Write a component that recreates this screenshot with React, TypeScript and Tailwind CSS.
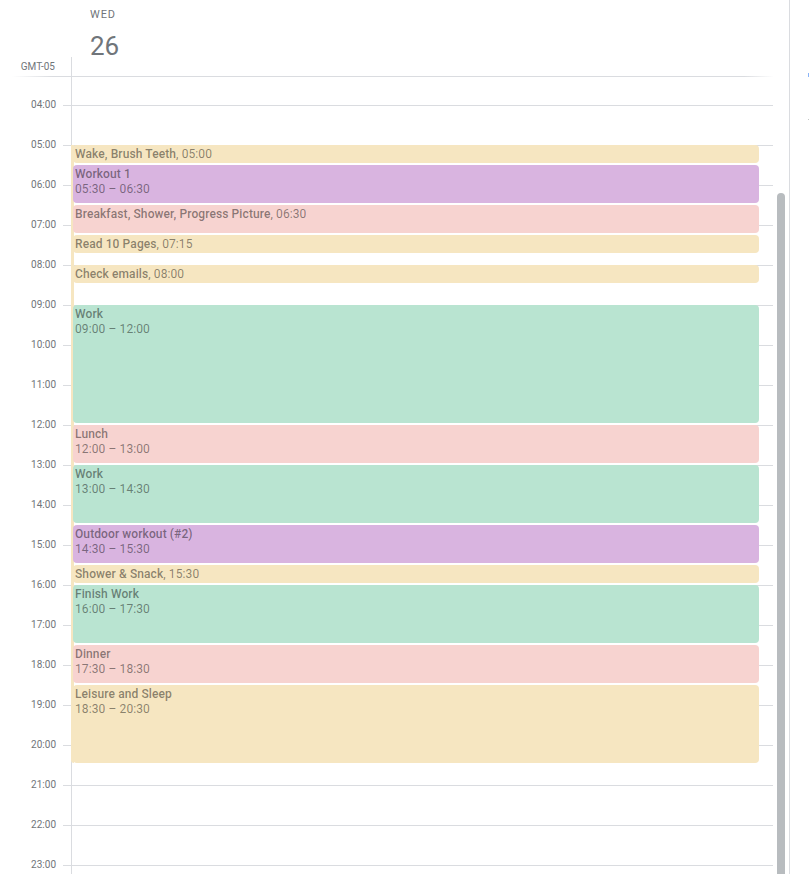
const HOURS = Array.from({ length: 20 }, (_, i) => i + 4);
const HOUR_H = 40;
const OFFSET = 28;

type Tone = "yellow" | "purple" | "pink" | "green";

interface CalEvent {
  title: string;
  start: number;
  end: number;
  tone: Tone;
  compact?: boolean;
}

const toneClass: Record<Tone, string> = {
  yellow: "bg-[#f6e6c1]",
  purple: "bg-[#d9b4e0]",
  pink: "bg-[#f7d3d0]",
  green: "bg-[#b9e4d1]",
};

const events: CalEvent[] = [
  { title: "Wake, Brush Teeth", start: 5, end: 5.5, tone: "yellow", compact: true },
  { title: "Workout 1", start: 5.5, end: 6.5, tone: "purple" },
  { title: "Breakfast, Shower, Progress Picture", start: 6.5, end: 7.25, tone: "pink", compact: true },
  { title: "Read 10 Pages", start: 7.25, end: 7.75, tone: "yellow", compact: true },
  { title: "Check emails", start: 8, end: 8.5, tone: "yellow", compact: true },
  { title: "Work", start: 9, end: 12, tone: "green" },
  { title: "Lunch", start: 12, end: 13, tone: "pink" },
  { title: "Work", start: 13, end: 14.5, tone: "green" },
  { title: "Outdoor workout (#2)", start: 14.5, end: 15.5, tone: "purple" },
  { title: "Shower & Snack", start: 15.5, end: 16, tone: "yellow", compact: true },
  { title: "Finish Work", start: 16, end: 17.5, tone: "green" },
  { title: "Dinner", start: 17.5, end: 18.5, tone: "pink" },
  { title: "Leisure and Sleep", start: 18.5, end: 20.5, tone: "yellow" },
];

const fmt = (t: number) => {
  const h = Math.floor(t);
  const m = Math.round((t - h) * 60);
  return `${h.toString().padStart(2, "0")}:${m.toString().padStart(2, "0")}`;
};

const topOf = (t: number) => OFFSET + (t - 4) * HOUR_H;

function EventBlock({ ev }: { ev: CalEvent }) {
  return (
    <div
      className={`absolute left-[1px] right-[14px] overflow-hidden rounded-[4px] pl-[2px] pt-[2px] text-[12px] leading-[15px] tracking-[0.1px] text-black/45 ${toneClass[ev.tone]}`}
      style={{ top: topOf(ev.start), height: (ev.end - ev.start) * HOUR_H - 2 }}
    >
      {ev.compact ? (
        <div className="truncate">
          <span className="font-medium">{ev.title}</span>, {fmt(ev.start)}
        </div>
      ) : (
        <>
          <div className="truncate font-medium">{ev.title}</div>
          <div>
            {fmt(ev.start)} – {fmt(ev.end)}
          </div>
        </>
      )}
    </div>
  );
}

export default function App() {
  return (
    <div className="flex h-[874px] w-[809px] overflow-hidden bg-white font-[Roboto,sans-serif] text-[#70757a]">
      <div className="flex w-[790px] flex-col border-r border-[#dadce0]">
        {/* header */}
        <div className="flex h-[76px] shrink-0">
          <div className="flex w-[72px] flex-col justify-end">
            <div className="flex h-[19px] items-center justify-end border-r border-[#dadce0] pr-[16px] text-[10px]">
              GMT-05
            </div>
          </div>
          <div className="flex-1 pl-[18px] pt-[7px]">
            <div className="text-[11px] leading-[16px] tracking-[0.9px]">WED</div>
            <div className="mt-[7px] text-[26px] leading-[32px]">26</div>
          </div>
        </div>
        <div className="ml-[12px] h-px w-[762px] shrink-0 bg-[linear-gradient(to_right,transparent,#dadce0_40px,#dadce0_calc(100%-30px),transparent)]" />

        {/* body */}
        <div className="flex min-h-0 flex-1">
          <div className="w-[71px] shrink-0">
            <div className="h-[28px]" />
            {HOURS.map((h) => (
              <div key={h} className="flex h-[40px] items-start">
                <span className="-mt-[6px] w-[56px] text-right text-[10px] leading-[12px]">
                  {fmt(h)}
                </span>
                <span className="ml-auto w-[8px] border-t border-[#dadce0]" />
              </div>
            ))}
          </div>

          <div className="relative w-[702px] shrink-0 border-l border-[#dadce0]">
            <div className="h-[28px]" />
            {HOURS.map((h) => (
              <div key={h} className="h-[40px] border-t border-[#dadce0]" />
            ))}
            <div
              className="absolute left-[-1px] w-[3px] rounded-bl-[3px] bg-[#f6e6c1]"
              style={{ top: topOf(5), height: 15.5 * HOUR_H - 2 }}
            />
            {events.map((ev, i) => (
              <EventBlock key={i} ev={ev} />
            ))}
          </div>

          <div className="w-[16px] shrink-0 pl-[4px]">
            <div className="mt-[116px] h-full w-[8px] rounded-t-[4px] bg-[#b8bcbf]" />
          </div>
        </div>
      </div>

      <div className="flex flex-1 flex-col items-end pt-[73px]">
        <div className="h-[4px] w-px bg-[#8ab4f8]" />
        <div className="mt-[42px] h-px w-px bg-[#c4c7c5]" />
      </div>
    </div>
  );
}
